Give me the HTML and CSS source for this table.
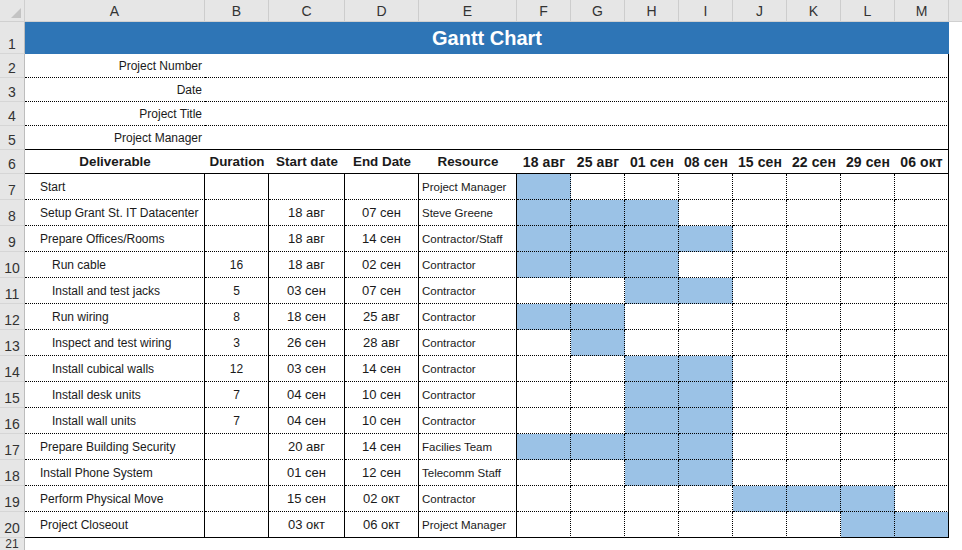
FILE: index.html
```html
<!DOCTYPE html>
<html lang="en">
<head>
<meta charset="utf-8">
<title>Gantt Chart</title>
<link rel="stylesheet" href="styles.css">
</head>
<body>
<div class="sheet">
  <div class="row colhead">
    <div class="corner"><svg width="10" height="10" viewBox="0 0 10 10"><polygon points="10,0 10,10 0,10" fill="#c3c3c3"/></svg></div>
    <div class="ch">A</div><div class="ch">B</div><div class="ch">C</div><div class="ch">D</div><div class="ch">E</div>
    <div class="ch">F</div><div class="ch">G</div><div class="ch">H</div><div class="ch">I</div><div class="ch">J</div>
    <div class="ch">K</div><div class="ch">L</div><div class="ch">M</div><div class="ch fill"></div>
  </div>

  <div class="row title-row">
    <div class="rn">1</div>
    <div class="title">Gantt Chart</div>
    <div class="f"></div>
  </div>

  <div class="row info">
    <div class="rn">2</div><div class="lbl">Project Number</div><div class="val"></div><div class="f"></div>
  </div>
  <div class="row info">
    <div class="rn">3</div><div class="lbl">Date</div><div class="val"></div><div class="f"></div>
  </div>
  <div class="row info">
    <div class="rn">4</div><div class="lbl">Project Title</div><div class="val"></div><div class="f"></div>
  </div>
  <div class="row info info-last">
    <div class="rn">5</div><div class="lbl">Project Manager</div><div class="val"></div><div class="f"></div>
  </div>

  <div class="row head">
    <div class="rn">6</div>
    <div class="h">Deliverable</div><div class="h">Duration</div><div class="h">Start date</div><div class="h">End Date</div><div class="h">Resource</div>
    <div class="h wk">18 авг</div><div class="h wk">25 авг</div><div class="h wk">01 сен</div><div class="h wk">08 сен</div>
    <div class="h wk">15 сен</div><div class="h wk">22 сен</div><div class="h wk">29 сен</div><div class="h wk m">06 окт</div>
    <div class="f"></div>
  </div>

  <div class="row task">
    <div class="rn">7</div><div class="c a">Start</div><div class="c n"></div><div class="c d"></div><div class="c d"></div><div class="c e">Project Manager</div>
    <div class="g on"></div><div class="g"></div><div class="g"></div><div class="g"></div><div class="g"></div><div class="g"></div><div class="g"></div><div class="g m"></div><div class="f"></div>
  </div>
  <div class="row task">
    <div class="rn">8</div><div class="c a">Setup Grant St. IT Datacenter</div><div class="c n"></div><div class="c d">18 авг</div><div class="c d">07 сен</div><div class="c e">Steve Greene</div>
    <div class="g on"></div><div class="g on"></div><div class="g on"></div><div class="g"></div><div class="g"></div><div class="g"></div><div class="g"></div><div class="g m"></div><div class="f"></div>
  </div>
  <div class="row task">
    <div class="rn">9</div><div class="c a">Prepare Offices/Rooms</div><div class="c n"></div><div class="c d">18 авг</div><div class="c d">14 сен</div><div class="c e">Contractor/Staff</div>
    <div class="g on"></div><div class="g on"></div><div class="g on"></div><div class="g on"></div><div class="g"></div><div class="g"></div><div class="g"></div><div class="g m"></div><div class="f"></div>
  </div>
  <div class="row task">
    <div class="rn">10</div><div class="c a sub">Run cable</div><div class="c n">16</div><div class="c d">18 авг</div><div class="c d">02 сен</div><div class="c e">Contractor</div>
    <div class="g on"></div><div class="g on"></div><div class="g on"></div><div class="g"></div><div class="g"></div><div class="g"></div><div class="g"></div><div class="g m"></div><div class="f"></div>
  </div>
  <div class="row task">
    <div class="rn">11</div><div class="c a sub">Install and test jacks</div><div class="c n">5</div><div class="c d">03 сен</div><div class="c d">07 сен</div><div class="c e">Contractor</div>
    <div class="g"></div><div class="g"></div><div class="g on"></div><div class="g on"></div><div class="g"></div><div class="g"></div><div class="g"></div><div class="g m"></div><div class="f"></div>
  </div>
  <div class="row task">
    <div class="rn">12</div><div class="c a sub">Run wiring</div><div class="c n">8</div><div class="c d">18 сен</div><div class="c d">25 авг</div><div class="c e">Contractor</div>
    <div class="g on"></div><div class="g on"></div><div class="g"></div><div class="g"></div><div class="g"></div><div class="g"></div><div class="g"></div><div class="g m"></div><div class="f"></div>
  </div>
  <div class="row task">
    <div class="rn">13</div><div class="c a sub">Inspect and test wiring</div><div class="c n">3</div><div class="c d">26 сен</div><div class="c d">28 авг</div><div class="c e">Contractor</div>
    <div class="g"></div><div class="g on"></div><div class="g"></div><div class="g"></div><div class="g"></div><div class="g"></div><div class="g"></div><div class="g m"></div><div class="f"></div>
  </div>
  <div class="row task">
    <div class="rn">14</div><div class="c a sub">Install cubical walls</div><div class="c n">12</div><div class="c d">03 сен</div><div class="c d">14 сен</div><div class="c e">Contractor</div>
    <div class="g"></div><div class="g"></div><div class="g on"></div><div class="g on"></div><div class="g"></div><div class="g"></div><div class="g"></div><div class="g m"></div><div class="f"></div>
  </div>
  <div class="row task">
    <div class="rn">15</div><div class="c a sub">Install desk units</div><div class="c n">7</div><div class="c d">04 сен</div><div class="c d">10 сен</div><div class="c e">Contractor</div>
    <div class="g"></div><div class="g"></div><div class="g on"></div><div class="g on"></div><div class="g"></div><div class="g"></div><div class="g"></div><div class="g m"></div><div class="f"></div>
  </div>
  <div class="row task">
    <div class="rn">16</div><div class="c a sub">Install wall units</div><div class="c n">7</div><div class="c d">04 сен</div><div class="c d">10 сен</div><div class="c e">Contractor</div>
    <div class="g"></div><div class="g"></div><div class="g on"></div><div class="g on"></div><div class="g"></div><div class="g"></div><div class="g"></div><div class="g m"></div><div class="f"></div>
  </div>
  <div class="row task">
    <div class="rn">17</div><div class="c a">Prepare Building Security</div><div class="c n"></div><div class="c d">20 авг</div><div class="c d">14 сен</div><div class="c e">Facilies Team</div>
    <div class="g on"></div><div class="g on"></div><div class="g on"></div><div class="g on"></div><div class="g"></div><div class="g"></div><div class="g"></div><div class="g m"></div><div class="f"></div>
  </div>
  <div class="row task">
    <div class="rn">18</div><div class="c a">Install Phone System</div><div class="c n"></div><div class="c d">01 сен</div><div class="c d">12 сен</div><div class="c e">Telecomm Staff</div>
    <div class="g"></div><div class="g"></div><div class="g on"></div><div class="g on"></div><div class="g"></div><div class="g"></div><div class="g"></div><div class="g m"></div><div class="f"></div>
  </div>
  <div class="row task">
    <div class="rn">19</div><div class="c a">Perform Physical Move</div><div class="c n"></div><div class="c d">15 сен</div><div class="c d">02 окт</div><div class="c e">Contractor</div>
    <div class="g"></div><div class="g"></div><div class="g"></div><div class="g"></div><div class="g on"></div><div class="g on"></div><div class="g on"></div><div class="g m"></div><div class="f"></div>
  </div>
  <div class="row task task-last">
    <div class="rn">20</div><div class="c a">Project Closeout</div><div class="c n"></div><div class="c d">03 окт</div><div class="c d">06 окт</div><div class="c e">Project Manager</div>
    <div class="g"></div><div class="g"></div><div class="g"></div><div class="g"></div><div class="g"></div><div class="g"></div><div class="g on"></div><div class="g on m"></div><div class="f"></div>
  </div>
  <div class="row tail">
    <div class="rn">21</div><div class="f"></div>
  </div>
</div>
</body>
</html>
```

FILE: styles.css
```css
* { box-sizing: border-box; }
html, body { margin: 0; padding: 0; background: #fff; }
body {
  width: 962px;
  height: 550px;
  overflow: hidden;
  font-family: "Liberation Sans", Arial, sans-serif;
  color: #1a1a1a;
}
.sheet { display: flex; flex-direction: column; height: 550px; overflow: hidden; }
.row {
  display: grid;
  grid-template-columns: 25px 180px 64px 76px 74px 98px repeat(8, 54px) 1fr;
  flex-shrink: 0;
}

/* column header */
.colhead { height: 22px; background: #e6e6e6; border-bottom: 1px solid #d0d0d0; }
.corner {
  display: flex; align-items: flex-end; justify-content: flex-end;
  padding: 0 3px 3px 0;
  border-right: 1px solid #cfcfcf;
}
.ch {
  display: flex; align-items: center; justify-content: center;
  font-size: 14px; color: #333;
  border-right: 1px solid #cdcdcd;
  padding-top: 1px;
}
.ch.fill { border-right: none; }

/* row numbers */
.rn {
  background: #e6e6e6;
  border-right: 1px solid #bdbdbd;
  border-bottom: 1px solid #d6d6d6;
  display: flex; align-items: flex-end; justify-content: center;
  font-size: 14px; color: #333;
  padding-bottom: 1px;
  line-height: 16px;
}
.f { background: #fff; }

/* title */
.title-row { height: 32px; }
.title {
  grid-column: 2 / 15;
  background: #2e75b6;
  color: #fff;
  font-weight: bold;
  font-size: 20px;
  display: flex; align-items: center; justify-content: center;
}

/* info rows */
.info { height: 24px; }
.lbl {
  display: flex; align-items: center; justify-content: flex-end;
  padding-right: 3px;
  font-size: 12px;
  border-bottom: 1px dotted #000;
}
.val {
  grid-column: 3 / 15;
  border-bottom: 1px dotted #000;
  border-right: 1px solid #000;
}
.info-last .lbl, .info-last .val { border-bottom: 1px solid #000; }

/* header row */
.head { height: 24px; }
.h {
  display: flex; align-items: center; justify-content: center;
  font-weight: bold; font-size: 13.4px;
  border-bottom: 1px solid #000;
  white-space: nowrap;
}
.h.wk { font-size: 14px; letter-spacing: 0.1px; }
.h.m { border-right: 1px solid #000; }

/* task rows */
.task { height: 26px; }
.c {
  display: flex; align-items: center;
  border-right: 1px solid #000;
  border-bottom: 1px dotted #000;
  font-size: 12px;
  white-space: nowrap;
  overflow: hidden;
}
.c.a { padding-left: 15px; }
.c.a.sub { padding-left: 27px; }
.c.n { justify-content: center; }
.c.d { justify-content: center; font-size: 13px; }
.c.e { padding-left: 3px; font-size: 11.5px; }
.g {
  border-right: 1px dotted #000;
  border-bottom: 1px dotted #000;
}
.g.on { background: #9bc2e6; }
.g.m { border-right: 1px solid #000; }
.task-last .c, .task-last .g { border-bottom: 1px solid #000; }

.tail { flex: 1 1 0; min-height: 0; overflow: hidden; }
.tail .rn {
  border-bottom: none;
  align-items: flex-start;
  padding: 1px 0 0;
  font-size: 12px;
  line-height: 11px;
}
```
